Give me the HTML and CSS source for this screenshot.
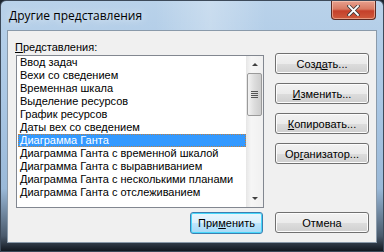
FILE: index.html
```html
<!DOCTYPE html>
<html lang="ru">
<head>
    <meta charset="UTF-8">
    <title>Другие представления</title>
    <link rel="stylesheet" href="styles.css">
</head>
<body>
    <div class="window">
        <div class="titlebar">
            <span class="title">Другие представления</span>
            <button class="close" type="button">
                <svg width="13" height="11" viewBox="0 0 13 11">
                    <path d="M2 1 L11 10 M11 1 L2 10" stroke="#3b3b3b" stroke-width="3.4" stroke-linecap="square"/>
                    <path d="M2 1 L11 10 M11 1 L2 10" stroke="#fff" stroke-width="1.8" stroke-linecap="square"/>
                </svg>
            </button>
        </div>

        <div class="client">
            <div class="main">
                <div class="left">
                    <label class="caption"><u>П</u>редставления:</label>
                    <div class="listbox">
                        <ul class="items">
                            <li>Ввод задач</li>
                            <li>Вехи со сведением</li>
                            <li>Временная шкала</li>
                            <li>Выделение ресурсов</li>
                            <li>График ресурсов</li>
                            <li>Даты вех со сведением</li>
                            <li class="selected">Диаграмма Ганта</li>
                            <li>Диаграмма Ганта с временной шкалой</li>
                            <li>Диаграмма Ганта с выравниванием</li>
                            <li>Диаграмма Ганта с несколькими планами</li>
                            <li>Диаграмма Ганта с отслеживанием</li>
                        </ul>
                        <div class="scrollbar">
                            <div class="arrow up"></div>
                            <div class="thumb">
                                <span></span><span></span><span></span><span></span>
                            </div>
                            <div class="track"></div>
                            <div class="arrow down"></div>
                        </div>
                    </div>
                </div>

                <div class="actions">
                    <button class="btn" type="button">Созд<u>а</u>ть...</button>
                    <button class="btn" type="button"><u>И</u>зменить...</button>
                    <button class="btn" type="button"><u>К</u>опировать...</button>
                    <button class="btn" type="button">Ор<u>г</u>анизатор...</button>
                </div>
            </div>

            <div class="footer">
                <button class="btn default" type="button">При<u>м</u>енить</button>
                <button class="btn" type="button">Отмена</button>
            </div>
        </div>
    </div>
</body>
</html>
```

FILE: styles.css
```css
* {
    box-sizing: border-box;
    margin: 0;
    padding: 0;
}

body {
    width: 384px;
    height: 252px;
    overflow: hidden;
    background: #1c2530;
}

.window {
    width: 384px;
    height: 252px;
    display: flex;
    flex-direction: column;
    border: 1px solid #3d4a5a;
    border-radius: 6px 6px 0 0;
    background: linear-gradient(to bottom, #b9d2ea 0%, #aac7e4 40%, #9ab9d8 75%, #4a5a6c 94%, #121820 100%);
    padding: 0 6px 8px 6px;
}

.titlebar {
    height: 29px;
    display: flex;
    justify-content: space-between;
    align-items: flex-start;
    background: linear-gradient(to right, transparent 40%, rgba(255, 255, 255, 0.25) 55%, transparent 70%);
}

.title {
    font-family: "Open Sans", sans-serif;
    font-size: 12px;
    color: #000;
    margin: 6px 0 0 2px;
    text-shadow: 0 0 8px rgba(255, 255, 255, 0.9);
}

.close {
    width: 45px;
    height: 19px;
    margin-right: 1px;
    border: 1px solid #5b2a22;
    border-top: 0;
    border-radius: 0 0 4px 4px;
    background: linear-gradient(to bottom, #e7a08e 0%, #d87a62 45%, #c5402a 55%, #cf5a3c 100%);
    box-shadow: inset 0 0 0 1px rgba(255, 220, 200, 0.5);
    display: flex;
    align-items: center;
    justify-content: center;
}

.client {
    flex: 1;
    background: #f0f0f0;
    border: 1px solid #8a9aaa;
    font-family: "Liberation Sans", sans-serif;
    font-size: 11px;
    color: #000;
    padding: 9px 7px 0 7px;
    display: flex;
    flex-direction: column;
}

.main {
    display: flex;
    justify-content: space-between;
}

.left {
    display: flex;
    flex-direction: column;
}

.caption {
    height: 14px;
    line-height: 14px;
    margin-bottom: 1px;
}

.listbox {
    width: 248px;
    height: 153px;
    margin-left: 1px;
    border: 1px solid #828790;
    background: #fff;
    display: flex;
}

.items {
    list-style-type: none;
    flex: 1;
    padding-left: 1px;
    overflow: hidden;
}

.items li {
    height: 13px;
    line-height: 13px;
    padding-left: 2px;
    white-space: nowrap;
}

.items li.selected {
    background: #3399ff;
    color: #fff;
    outline: 1px dotted #c08040;
    outline-offset: -1px;
}

.scrollbar {
    width: 17px;
    display: flex;
    flex-direction: column;
    background: linear-gradient(to right, #e6e6e6, #f6f6f6 30%, #f0f0f0);
}

.arrow {
    height: 17px;
    display: flex;
    align-items: center;
    justify-content: center;
}

.arrow::before {
    content: "";
    border-left: 3px solid transparent;
    border-right: 3px solid transparent;
}

.arrow.up::before {
    border-bottom: 3px solid #404040;
}

.arrow.down::before {
    border-top: 3px solid #404040;
}

.thumb {
    height: 43px;
    margin: 0 1px;
    border: 1px solid #9a9a9a;
    border-radius: 2px;
    background: linear-gradient(to right, #f2f2f2, #dcdcdc 50%, #cdcdcd);
    display: flex;
    flex-direction: column;
    align-items: center;
    justify-content: center;
    gap: 1px;
}

.thumb span {
    width: 7px;
    height: 1px;
    background: #555;
}

.track {
    flex: 1;
}

.actions {
    display: flex;
    flex-direction: column;
    gap: 9px;
    padding-top: 13px;
}

.btn {
    width: 94px;
    height: 21px;
    font-family: "Liberation Sans", sans-serif;
    font-size: 11px;
    color: #000;
    border: 1px solid #707070;
    border-radius: 3px;
    background: linear-gradient(to bottom, #f2f2f2 0%, #ebebeb 50%, #dddddd 51%, #cfcfcf 100%);
    box-shadow: inset 0 0 0 1px #fcfcfc;
}

.footer {
    display: flex;
    justify-content: flex-end;
    gap: 12px;
    margin-top: 4px;
}

.btn.default {
    width: 73px;
    height: 22px;
    border-color: #3c7fb1;
    background: linear-gradient(to bottom, #eaf6fd 0%, #d9f0fc 50%, #bee6fd 51%, #a7d9f5 100%);
    box-shadow: inset 0 0 0 1px #48d8fb;
}
```
